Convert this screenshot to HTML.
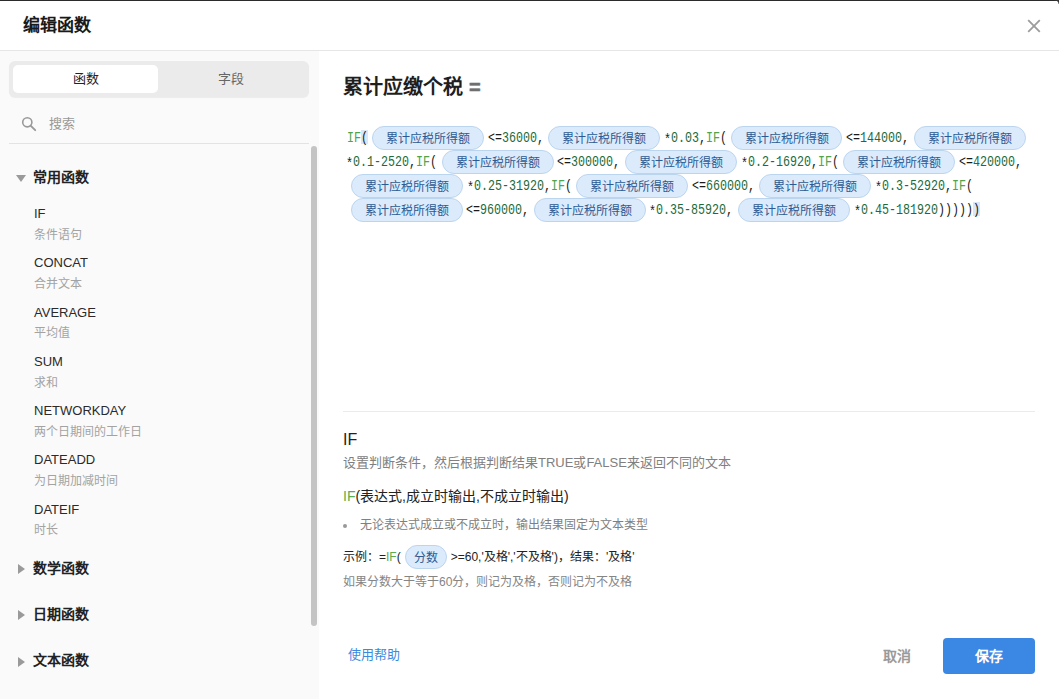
<!DOCTYPE html>
<html lang="zh-CN"><head><meta charset="utf-8">
<style>
*{box-sizing:border-box;margin:0;padding:0}
html,body{width:1059px;height:699px;overflow:hidden;background:#fff}
body{font-family:"Liberation Sans",sans-serif;color:#333;position:relative}
.a{position:absolute;white-space:nowrap}
#topline{left:0;top:0;width:1059px;height:1px;background:#2b2b2b}
#header{left:0;top:1px;width:1059px;height:50px;border-bottom:1px solid #e6e6e6;background:#fff}
#title{left:23px;top:14px;font-size:17px;line-height:24px;font-weight:bold;color:#1a1a1a}
#left{left:0;top:51px;width:319px;height:648px;background:#fafafa}
#tabs{left:9px;top:61px;width:300px;height:36px;background:#ebebeb;border-radius:6px;box-shadow:0 1px 1px rgba(0,0,0,0.06)}
#tab1{left:13px;top:65px;width:145px;height:28px;background:#fff;border-radius:5px;font-size:13px;line-height:28px;text-align:center;color:#222}
#tab2{left:158.5px;top:65px;width:145px;height:28px;font-size:13px;line-height:28px;text-align:center;color:#666}
#searchtxt{left:49px;top:115px;font-size:13px;line-height:18px;color:#999}
#searchline{left:9px;top:143px;width:300px;height:1px;background:#e3e3e3}
#scroll{left:311px;top:146px;width:6px;height:480px;background:#c4c4c4;border-radius:3px}
.sec{font-size:14px;font-weight:bold;line-height:18px;color:#222;left:33px}
.tri{left:17px;width:0;height:0}
.tri.down{left:16px;border-left:5px solid transparent;border-right:5px solid transparent;border-top:7.5px solid #9a9a9a}
.tri.right{left:18px;border-top:5px solid transparent;border-bottom:5px solid transparent;border-left:7.5px solid #9a9a9a}
.fn{left:34px;font-size:13px;line-height:16px;color:#2a2a2a}
.fd{left:34px;font-size:12px;line-height:16px;color:#a3a3a3}
#close{left:1026px;top:18px;width:16px;height:16px}
#ftitle{left:343px;top:75px;font-size:20px;line-height:24px;font-weight:bold;color:#1e1e1e}
#ftitle span{color:#6f6f6f;margin-left:6px;font-size:20px;-webkit-text-stroke:0.5px #6f6f6f}
.pill{position:absolute;height:24px;width:111.5px;border:1px solid #bcd5ef;background:#dcebfc;border-radius:12px;font-size:12px;line-height:24px;color:#2c5a92;text-align:center;white-space:nowrap}
.ft{position:absolute;font-family:"Liberation Mono",monospace;font-size:14px;line-height:24px;color:#1a1a1a;white-space:nowrap;transform:scaleX(0.8333);transform-origin:0 0}
.ft i{font-style:normal}
.ft .k{color:#4fa34a}
.ft .s{position:relative;top:2px}
.ft .n{color:#1d6b3a}
.hl{position:absolute;background:#d9e7f8}
#divider{left:343px;top:411px;width:692px;height:1px;background:#ebebeb}
#iftitle{left:343px;top:430px;font-size:16px;line-height:20px;color:#222}
#ifdesc{left:343px;top:455px;font-size:13px;line-height:16px;color:#808080}
#ifsig{left:343px;top:487px;font-size:14px;line-height:18px;color:#222}
#ifsig b{font-weight:normal;color:#58ad4e}
#bullet{left:343px;top:524px;width:4px;height:4px;border-radius:50%;background:#999}
#bullettxt{left:360px;top:517px;font-size:12px;line-height:16px;color:#808080}
#example{left:343px;top:549px;font-size:12px;line-height:16px;color:#222}
#example b{font-weight:normal;color:#58ad4e}
#expill{left:405px;top:545px;width:42px;height:23.5px;border:1px solid #bcd5ef;background:#dcebfc;border-radius:12px;font-size:12px;line-height:24px;color:#2c5a92;text-align:center}
#exdesc{left:343px;top:574px;font-size:12px;line-height:16px;color:#858585}
#help{left:348px;top:646px;font-size:13px;line-height:18px;color:#3b8ae0}
#cancel{left:883px;top:647px;font-size:14px;line-height:18px;font-weight:bold;color:#9a9a9a}
#save{left:943px;top:638px;width:92px;height:36px;background:#3b87e4;border-radius:4px;color:#fff;font-size:14px;font-weight:bold;line-height:36px;text-align:center}
</style></head><body>
<div class="a" id="header"></div>
<div class="a" id="topline"></div>
<div class="a" style="left:1055px;top:0;width:4px;height:4px;background:radial-gradient(circle at 0 100%, rgba(0,0,0,0) 3px, #3a3a3a 4px)"></div>
<div class="a" id="title">编辑函数</div>
<svg class="a" id="close" viewBox="0 0 16 16"><path d="M2.2 2.2 L13.8 13.8 M13.8 2.2 L2.2 13.8" stroke="#9c9c9c" stroke-width="1.8" fill="none"/></svg>
<div class="a" id="left"></div>
<div class="a" id="tabs"></div>
<div class="a" id="tab1">函数</div>
<div class="a" id="tab2">字段</div>
<svg class="a" style="left:21px;top:116px" width="16" height="16" viewBox="0 0 16 16"><circle cx="6.3" cy="6.3" r="4.6" stroke="#999" stroke-width="1.6" fill="none"/><path d="M9.6 9.6 L14.2 14.2" stroke="#999" stroke-width="1.9" stroke-linecap="round"/></svg>
<div class="a" id="searchtxt">搜索</div>
<div class="a" id="searchline"></div>
<div class="a" id="scroll"></div>

<div class="a tri down" style="top:175px"></div>
<div class="a sec" style="top:168px">常用函数</div>
<div class="a fn" style="top:206px">IF</div>
<div class="a fd" style="top:227px">条件语句</div>
<div class="a fn" style="top:255px">CONCAT</div>
<div class="a fd" style="top:276px">合并文本</div>
<div class="a fn" style="top:305px">AVERAGE</div>
<div class="a fd" style="top:325px">平均值</div>
<div class="a fn" style="top:354px">SUM</div>
<div class="a fd" style="top:375px">求和</div>
<div class="a fn" style="top:403px">NETWORKDAY</div>
<div class="a fd" style="top:424px">两个日期间的工作日</div>
<div class="a fn" style="top:452px">DATEADD</div>
<div class="a fd" style="top:473px">为日期加减时间</div>
<div class="a fn" style="top:502px">DATEIF</div>
<div class="a fd" style="top:522px">时长</div>

<div class="a tri right" style="top:564px"></div>
<div class="a sec" style="top:559px">数学函数</div>
<div class="a tri right" style="top:610px"></div>
<div class="a sec" style="top:605px">日期函数</div>
<div class="a tri right" style="top:656.5px"></div>
<div class="a sec" style="top:651px">文本函数</div>

<div class="a" id="ftitle">累计应缴个税<span>=</span></div>
<div class="hl" style="left:361px;top:130px;width:7px;height:14px"></div>
<div class="hl" style="left:973px;top:202px;width:7px;height:14px"></div>
<div class="ft" style="left:346.5px;top:126px"><i class="k">IF</i>(</div>
<div class="pill" style="left:372.2px;top:126px">累计应税所得额</div>
<div class="ft" style="left:487.5px;top:126px">&lt;=<i class="n">36000</i>,</div>
<div class="pill" style="left:548.3px;top:126px">累计应税所得额</div>
<div class="ft" style="left:663.6px;top:126px"><i class="s">*</i><i class="n">0.03</i>,<i class="k">IF</i>(</div>
<div class="pill" style="left:730.8px;top:126px">累计应税所得额</div>
<div class="ft" style="left:846.0px;top:126px">&lt;=<i class="n">144000</i>,</div>
<div class="pill" style="left:914.3px;top:126px">累计应税所得额</div>
<div class="ft" style="left:346.3px;top:150px"><i class="s">*</i><i class="n">0.1-2520</i>,<i class="k">IF</i>(</div>
<div class="pill" style="left:442.2px;top:150px">累计应税所得额</div>
<div class="ft" style="left:557.3px;top:150px">&lt;=<i class="n">300000</i>,</div>
<div class="pill" style="left:625.2px;top:150px">累计应税所得额</div>
<div class="ft" style="left:740.7px;top:150px"><i class="s">*</i><i class="n">0.2-16920</i>,<i class="k">IF</i>(</div>
<div class="pill" style="left:843.2px;top:150px">累计应税所得额</div>
<div class="ft" style="left:959.0px;top:150px">&lt;=<i class="n">420000</i>,</div>
<div class="pill" style="left:351.4px;top:174px">累计应税所得额</div>
<div class="ft" style="left:466.8px;top:174px"><i class="s">*</i><i class="n">0.25-31920</i>,<i class="k">IF</i>(</div>
<div class="pill" style="left:576.4px;top:174px">累计应税所得额</div>
<div class="ft" style="left:691.7px;top:174px">&lt;=<i class="n">660000</i>,</div>
<div class="pill" style="left:759.1px;top:174px">累计应税所得额</div>
<div class="ft" style="left:875.0px;top:174px"><i class="s">*</i><i class="n">0.3-52920</i>,<i class="k">IF</i>(</div>
<div class="pill" style="left:351.4px;top:198px">累计应税所得额</div>
<div class="ft" style="left:466.1px;top:198px">&lt;=<i class="n">960000</i>,</div>
<div class="pill" style="left:534.2px;top:198px">累计应税所得额</div>
<div class="ft" style="left:649.1px;top:198px"><i class="s">*</i><i class="n">0.35-85920</i>,</div>
<div class="pill" style="left:738.4px;top:198px">累计应税所得额</div>
<div class="ft" style="left:853.9px;top:198px"><i class="s">*</i><i class="n">0.45-181920</i>))))))</div>
<div class="a" id="divider"></div>
<div class="a" id="iftitle">IF</div>
<div class="a" id="ifdesc">设置判断条件，然后根据判断结果TRUE或FALSE来返回不同的文本</div>
<div class="a" id="ifsig"><b>IF</b>(表达式,成立时输出,不成立时输出)</div>
<div class="a" id="bullet"></div>
<div class="a" id="bullettxt">无论表达式成立或不成立时，输出结果固定为文本类型</div>
<div class="a" id="example">示例：=<b>IF</b>(<span style="display:inline-block;width:50px"></span>&gt;=60,'及格','不及格')，结果：'及格'</div>
<div class="a" id="expill">分数</div>
<div class="a" id="exdesc">如果分数大于等于60分，则记为及格，否则记为不及格</div>
<div class="a" id="help">使用帮助</div>
<div class="a" id="cancel">取消</div>
<div class="a" id="save">保存</div>
</body></html>
